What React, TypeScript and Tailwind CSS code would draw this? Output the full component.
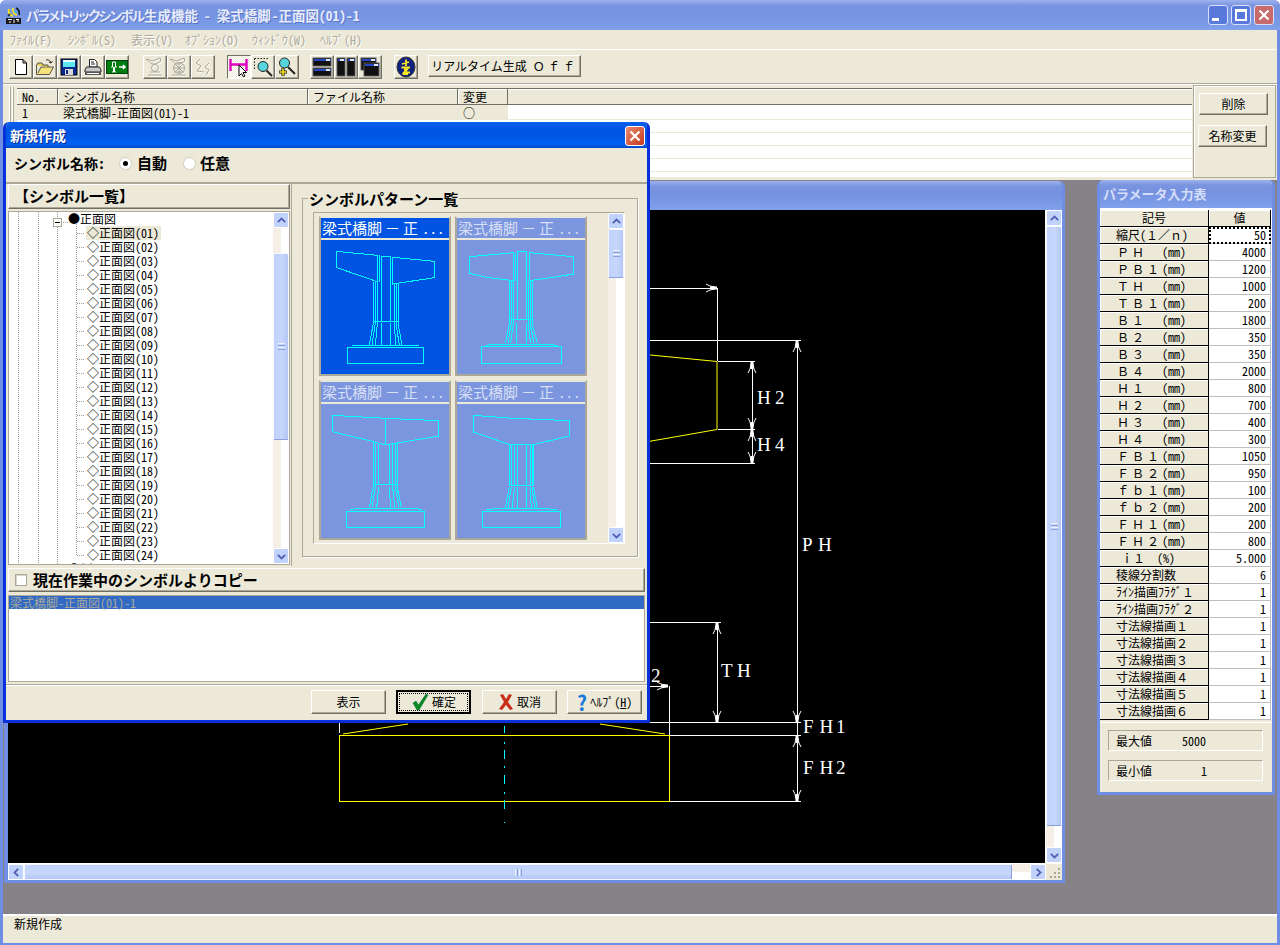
import React from "react";

const raised = "bg-[#ece9d8] border border-t-white border-l-white border-b-[#716f64] border-r-[#716f64] shadow-[inset_-1px_-1px_0_#aca899]";
const titleBg = "bg-[linear-gradient(180deg,#9db2ee_0%,#7a95e0_18%,#7592e0_45%,#7b9ae6_80%,#82a2ee_100%)]";
const fw = "[font-feature-settings:normal]";

function Chevron({ dir }: { dir: "u" | "d" | "l" | "r" }) {
  const a = { u: 0, d: 180, l: 270, r: 90 }[dir];
  return (
    <svg width="9" height="9" viewBox="0 0 9 9" style={{ transform: `rotate(${a}deg)` }}>
      <path d="M0.8 6.2 L4.5 2.5 L8.2 6.2" fill="none" stroke="#4d61b5" strokeWidth="1.8" />
    </svg>
  );
}

function ScrollBtn({ dir }: { dir: "u" | "d" | "l" | "r" }) {
  return (
    <div className="flex h-[16px] w-[16px] shrink-0 items-center justify-center rounded-[2px] border border-white bg-[#c1d3fb]">
      <Chevron dir={dir} />
    </div>
  );
}

function Grip({ vertical }: { vertical?: boolean }) {
  return vertical ? (
    <div className="flex flex-col gap-[1px]">
      <div className="h-[1px] w-[7px] bg-[#eef2fd]" />
      <div className="h-[1px] w-[7px] bg-[#8aa0dc]" />
      <div className="h-[1px] w-[7px] bg-[#eef2fd]" />
      <div className="h-[1px] w-[7px] bg-[#8aa0dc]" />
    </div>
  ) : (
    <div className="flex gap-[1px]">
      <div className="h-[7px] w-[1px] bg-[#eef2fd]" />
      <div className="h-[7px] w-[1px] bg-[#8aa0dc]" />
      <div className="h-[7px] w-[1px] bg-[#eef2fd]" />
      <div className="h-[7px] w-[1px] bg-[#8aa0dc]" />
    </div>
  );
}

function VThumb({ h }: { h: string }) {
  return (
    <div className={`flex w-full items-center justify-center rounded-[2px] border border-[#f4f7ff] border-b-[#8aa0dc] bg-[linear-gradient(90deg,#c1d3fb_0%,#c6d6fc_55%,#b4c7f5_100%)] ${h}`}>
      <Grip vertical />
    </div>
  );
}

/* ---------- toolbar icons ---------- */
const New = () => (
  <svg width="16" height="18" viewBox="0 0 16 18"><path d="M2.5 1.5H10L13.5 5V16.5H2.5Z M10 1.5V5H13.5" fill="#fff" stroke="#000" /></svg>
);
const Open = () => (
  <svg width="20" height="18" viewBox="0 0 20 18">
    <path d="M1.5 7V16.5H14.5L18.5 9H6L3 15" fill="#f6e27a" stroke="#555" />
    <path d="M1.5 7L3 5H7L8 7H13V9" fill="#e8c93f" stroke="#555" />
    <path d="M11 2C13 1.5 15 2 16 5M16 5L14 4M16 5L17.5 3.2" fill="none" stroke="#222" />
  </svg>
);
const Save = () => (
  <svg width="18" height="18" viewBox="0 0 18 18">
    <rect x="1" y="1" width="16" height="16" fill="#0c2a8c" stroke="#000" />
    <rect x="3" y="2" width="12" height="7" fill="#5de7f0" />
    <rect x="3" y="2" width="12" height="2" fill="#eaffff" />
    <rect x="5" y="11" width="8" height="6" fill="#d8d8d8" />
    <rect x="6" y="12" width="2" height="4" fill="#0c2a8c" />
  </svg>
);
const Print = () => (
  <svg width="18" height="18" viewBox="0 0 18 18">
    <path d="M5.5 1.5H10.5L13 4V9H5.5Z" fill="#fff" stroke="#222" />
    <path d="M7 4H10M7 6H11" stroke="#222" />
    <path d="M2.5 9H15.5L17 12V14H1V12Z" fill="#c8c8c8" stroke="#222" />
    <rect x="1" y="14" width="16" height="3" fill="#555" />
    <rect x="3" y="15" width="12" height="1" fill="#fff" />
  </svg>
);
const Exit = () => (
  <svg width="22" height="14" viewBox="0 0 22 14">
    <rect width="22" height="14" fill="#007c10" />
    <rect x="0.5" y="0.5" width="21" height="13" fill="none" stroke="#00400a" />
    <path d="M5 7H6.5V2H9.5V7H11M7.5 7V12M8.5 7V12M6 12H7.5M8.5 12H10" stroke="#fff" fill="none" />
    <path d="M13 7H19M17 5L19 7L17 9" stroke="#fff" fill="none" strokeWidth="1.5" />
  </svg>
);
const Dis1 = ({ wheel }: { wheel?: boolean }) => (
  <svg width="20" height="20" viewBox="0 0 20 20">
    <g fill="none" stroke="#fff" transform="translate(1 1)">
      <path d="M1 2L8 4L15 1L16 4L11 7H7ZM3 18H17M5 15H15" />
      <circle cx="10" cy="11" r="3.5" />
    </g>
    <g fill="none" stroke="#aca899">
      <path d="M1 2L8 4L15 1L16 4L11 7H7ZM3 18H17M5 15H15" />
      <circle cx="10" cy="11" r={wheel ? 5.5 : 3.5} />
      {wheel && <path d="M10 5.5V16.5M4.5 11H15.5M6 7L14 15M14 7L6 15" />}
    </g>
  </svg>
);
const Dis3 = () => (
  <svg width="20" height="20" viewBox="0 0 20 20">
    <path d="M7 2L3 6L8 9L4 14L11 15M16 6L12 10L16 13L13 18" fill="none" stroke="#fff" transform="translate(1 1)" />
    <path d="M7 2L3 6L8 9L4 14L11 15M16 6L12 10L16 13L13 18" fill="none" stroke="#aca899" />
  </svg>
);
const Pick = () => (
  <svg width="20" height="20" viewBox="0 0 20 20">
    <path d="M1.5 2V14M17.5 2V14M2 7.5H17" stroke="#e000c0" strokeWidth="2.4" fill="none" />
    <path d="M10 8L10 19L12.5 16.5L14.5 20L16 19L14 15.5L17.5 15.5Z" fill="#fff" stroke="#000" />
  </svg>
);
const Glass = ({ plus }: { plus?: boolean }) => (
  <svg width="20" height="20" viewBox="0 0 20 20">
    {plus ? (
      <>
        <circle cx="7.5" cy="6" r="5" fill="#56d6dc" stroke="#222" />
        <path d="M11 10L18 17" stroke="#222" strokeWidth="2" />
        <path d="M6 11V19M2 15H10" stroke="#222" strokeWidth="3.2" />
        <path d="M6 11.5V18.5M2.5 15H9.5" stroke="#f8e020" strokeWidth="1.6" />
      </>
    ) : (
      <>
        <path d="M1.5 1.5H16M1.5 1.5V12" stroke="#222" strokeDasharray="1.5 1.5" fill="none" />
        <circle cx="10" cy="9.5" r="5" fill="#56d6dc" stroke="#222" />
        <path d="M13.5 13.5L19 19" stroke="#222" strokeWidth="2" />
      </>
    )}
  </svg>
);
const Win = ({ x, y, w, h }: { x: number; y: number; w: number; h: number }) => (
  <g>
    <rect x={x} y={y} width={w} height={h} fill="#111" stroke="#555" />
    <rect x={x + 1} y={y + 1} width={w - 1} height="2" fill="#2848c8" />
    <rect x={x + w - 5} y={y + 1} width="4" height="2" fill="#dfe6f8" />
  </g>
);
const Stack = () => (
  <svg width="20" height="20" viewBox="0 0 20 20"><Win x={1} y={1} w={18} h={8} /><Win x={1} y={11} w={18} h={8} /></svg>
);
const Side = () => (
  <svg width="20" height="20" viewBox="0 0 20 20"><Win x={1} y={1} w={8} h={18} /><Win x={11} y={1} w={8} h={18} /></svg>
);
const Cascade = () => (
  <svg width="20" height="20" viewBox="0 0 20 20"><Win x={1} y={1} w={15} h={12} /><Win x={4} y={6} w={15} h={13} /></svg>
);
const Globe = () => (
  <svg width="20" height="22" viewBox="0 0 20 22">
    <ellipse cx="10" cy="11" rx="9" ry="10" fill="#10227c" stroke="#333" />
    <path d="M6 8L13 6M10 3.5V10M5.5 11.5H14M9 11V15M12 12.5L8 16.5H14M6.5 18H12" fill="none" stroke="#f8e820" strokeWidth="1.8" />
  </svg>
);

function TBtn({ children, pressed, className = "" }: { children: React.ReactNode; pressed?: boolean; className?: string }) {
  return (
    <div
      className={`flex h-[24px] w-[24px] shrink-0 items-center justify-center ${className} ${
        pressed
          ? "border border-t-[#716f64] border-l-[#716f64] border-b-white border-r-white bg-[repeating-conic-gradient(#ffffff_0%_25%,#ece9d8_0%_50%)] bg-[length:2px_2px]"
          : raised
      }`}
    >
      {children}
    </div>
  );
}

/* ---------- drawing of thumbnails ---------- */
function Pier({ vb, d }: { vb: string; d: string }) {
  return (
    <svg width="128" height="134" viewBox={vb} className="block" shapeRendering="crispEdges">
      <path d={d} fill="none" stroke="#00ffff" strokeWidth="3" />
    </svg>
  );
}

const p1 =
  "M108 214V262L232 305V226Z M278 232L404 244V293L278 312Z M244 228H270 M238 226V305 M244 228V424 M270 228V424 M220 305V430 M226 305V430 M232 305V430 M282 312V430 M288 312V430 M294 312V430 M220 424H294 M220 430L208 495 M226 430L216 495 M232 430L226 495 M244 430V495 M270 430V495 M282 430L288 495 M288 430L298 495 M294 430L306 495 M156 498L184 495H330L356 498 M142 502H371V550H142Z";
const p2 =
  "M508 230L640 218V302L560 292L508 280Z M688 218L821 230V282L760 292L688 302Z M652 214H680 M646 218V302 M652 214V418 M680 214V418 M628 302V430 M634 302V430 M640 302V430 M684 302V430 M690 302V430 M696 302V430 M628 418H700 M628 430L616 490 M634 430L624 490 M640 430L632 490 M650 430V490 M680 430V490 M684 430L692 490 M690 430L702 490 M696 430L712 490 M558 496L585 492H742L770 496 M544 499H785V550H544Z";
const p3 =
  "M97 706V755L225 786L245 792H272L416 768V722L258 715Z M256 716V792 M220 786V920 M226 786V920 M236 790V912 M268 792V912 M276 790V920 M286 790V920 M291 790V920 M220 912H290 M220 920L208 982 M226 920L216 982 M236 920L230 985 M268 920L272 985 M278 920L284 985 M286 920L296 982 M291 920L304 982 M150 990L165 986H355L365 990 M139 994H374V1042H139Z";
const p4 =
  "M520 706V756L630 794H700L808 768V722L640 715Z M628 794V916 M633 794V916 M644 794V916 M652 794V916 M680 794V916 M690 794V916 M696 794V916 M700 794V916 M628 916H700 M628 920L616 985 M634 920L624 985 M644 920L636 985 M652 920V985 M680 920V985 M690 920L694 985 M696 920L704 985 M700 920L712 985 M558 990L585 986H742L770 990 M548 994H782V1042H548Z";

function Thumb({ sel, vb, d }: { sel?: boolean; vb: string; d: string }) {
  const c = sel ? "bg-[#0054e3] text-white" : "bg-[#7b96df] text-[#d8dff5]";
  return (
    <div className="h-[160px] w-[132px] border-2 border-[#aca899] border-t-[#e8e6da] bg-[#ece9d8]">
      <div className={`h-[20px] overflow-hidden whitespace-nowrap pl-[1px] text-[15px] leading-[20px] ${c}`}>
        梁式橋脚<span className={`mx-[3px] ${fw}`}>－</span>正<span className="ml-[4px]">...</span>
      </div>
      <div className="h-[2px]" />
      <div className={c}>
        <Pier vb={vb} d={d} />
      </div>
    </div>
  );
}

/* ---------- CAD canvas ---------- */
function Arr({ x, y, a }: { x: number; y: number; a: number }) {
  return (
    <g transform={`translate(${x} ${y}) rotate(${a})`} stroke="#fff" fill="none">
      <path d="M0 0V7" strokeWidth="3" />
      <path d="M-1 2L-2 7L-4 11M1 2L2 7L4 11" strokeWidth="1" />
    </g>
  );
}

function Dim({ x, y, t, gap = 18 }: { x: number; y: number; t: string; gap?: number }) {
  const xs = t.split("").map((_, i) => x + i * gap).join(" ");
  return (
    <text x={xs} y={y} fill="#fff" fontSize="19" className="font-['Liberation_Serif',serif]">
      {t}
    </text>
  );
}

function Canvas() {
  return (
    <svg viewBox="8 210 1037 653" width="1037" height="653" className="block bg-black">
      <g fill="none" stroke="#fff" strokeWidth="1" shapeRendering="crispEdges">
        <path d="M640 288.5H717.5V361 M640 340.5H801 M797.5 340V802 M718 361.5H755 M752.5 361V463 M718 429.5H755 M640 463.5H755 M640 622.5H721 M717.5 622V722 M640 722.5H801 M669.5 686V735 M640 686.5H668 M670 735.5H801 M670 801.5H801 M339.5 723V733" />
      </g>
      <g fill="none" stroke="#ffff00" strokeWidth="1">
        <path d="M640 354L717 361.5V429.5L640 443" />
        <path d="M343 734L408 724M600 724L665 734" />
        <path d="M339.5 735.5H669.5V801.5H339.5Z" shapeRendering="crispEdges" />
      </g>
      <path d="M504.5 726V733M504.5 742V744M504.5 750V759M504.5 766V768M504.5 775V784M504.5 792V794M504.5 800V809M504.5 822V823" stroke="#00ffff" strokeWidth="1" fill="none" shapeRendering="crispEdges" />
      <Arr x={717} y={288} a={90} />
      <Arr x={797} y={341} a={0} />
      <Arr x={752} y={362} a={0} />
      <Arr x={752} y={429} a={180} />
      <Arr x={752} y={430} a={0} />
      <Arr x={752} y={463} a={180} />
      <Arr x={717} y={623} a={0} />
      <Arr x={717} y={722} a={180} />
      <Arr x={797} y={722} a={180} />
      <Arr x={797} y={736} a={0} />
      <Arr x={797} y={801} a={180} />
      <Arr x={668} y={686} a={90} />
      <Dim x={757} y={404} t="H2" />
      <Dim x={757} y={451} t="H4" />
      <Dim x={802} y={551} t="PH" gap={16} />
      <Dim x={721} y={677} t="TH" gap={16} />
      <Dim x={803} y={733} t="FH1" gap={16.5} />
      <Dim x={803} y={774} t="FH2" gap={16.5} />
      <Dim x={651} y={682} t="2" />
    </svg>
  );
}

/* ---------- parameter panel ---------- */
const mm = (a: string) => (
  <span className="pl-[17px]">
    <span className={`tracking-[3px] ${fw}`}>{a}</span>(mm)
  </span>
);
const line = (a: string, n: string) => (
  <span className="pl-[16px]">
    {a}
    <span className={fw}>{n}</span>
  </span>
);
const rows: [React.ReactNode, string][] = [
  [<span className="pl-[16px]">縮尺(<span className={fw}>１／ｎ</span>)</span>, "50"],
  [mm("ＰＨ　"), "4000"],
  [mm("ＰＢ１"), "1200"],
  [mm("ＴＨ　"), "1000"],
  [mm("ＴＢ１"), "200"],
  [mm("Ｂ１　"), "1800"],
  [mm("Ｂ２　"), "350"],
  [mm("Ｂ３　"), "350"],
  [mm("Ｂ４　"), "2000"],
  [mm("Ｈ１　"), "800"],
  [mm("Ｈ２　"), "700"],
  [mm("Ｈ３　"), "400"],
  [mm("Ｈ４　"), "300"],
  [mm("ＦＢ１"), "1050"],
  [mm("ＦＢ２"), "950"],
  [mm("ｆｂ１"), "100"],
  [mm("ｆｂ２"), "200"],
  [mm("ＦＨ１"), "200"],
  [mm("ＦＨ２"), "800"],
  [<span className="pl-[21px]"><span className={fw}>ｉ１　</span>(%)</span>, "5.000"],
  [<span className="pl-[16px]">稜線分割数</span>, "6"],
  [line("ﾗｲﾝ描画ﾌﾗｸﾞ", "１"), "1"],
  [line("ﾗｲﾝ描画ﾌﾗｸﾞ", "２"), "1"],
  [line("寸法線描画", "１"), "1"],
  [line("寸法線描画", "２"), "1"],
  [line("寸法線描画", "３"), "1"],
  [line("寸法線描画", "４"), "1"],
  [line("寸法線描画", "５"), "1"],
  [line("寸法線描画", "６"), "1"],
];

function ParamPanel() {
  const headCell = "h-[17px] border-r border-b border-black bg-[#ece9d8] shadow-[inset_1px_1px_0_#fff] text-center leading-[16px]";
  return (
    <div className="absolute left-[1094px] top-0 flex h-[615px] w-[178px] flex-col overflow-hidden rounded-t-[6px] border-x-[3px] border-b-[3px] border-[#6f8de3] bg-[#ece9d8] text-[12px] text-black">
      <div className={`-mx-[3px] flex h-[28px] shrink-0 items-center pl-[6px] text-[13px] font-bold text-[#d5def8] ${titleBg}`}>パラメータ入力表</div>
      <div className="bg-white pt-[2px]">
        <div className="flex w-[171px]">
          <div className={`${headCell} w-[109px]`}>記号</div>
          <div className={`${headCell} w-[62px]`}>値</div>
        </div>
        {rows.map(([label, val], i) => (
          <div key={i} className="flex h-[17px] w-[171px]">
            <div className="h-[17px] w-[109px] border-r border-b border-black bg-[#ece9d8] leading-[16px] shadow-[inset_1px_1px_0_#fff] whitespace-nowrap">{label}</div>
            <div className={`h-[17px] w-[62px] border-r border-b border-[#c0c0c0] bg-white pr-[4px] text-right leading-[16px] ${i === 0 ? "outline-2 outline-dotted -outline-offset-2 outline-black" : ""}`}>{val}</div>
          </div>
        ))}
      </div>
      <div className="mt-[2px] flex flex-1 flex-col gap-[9px] border-t border-white px-[8px] pt-[7px]">
        <div className="flex h-[21px] w-[155px] items-center border border-t-[#aca899] border-l-[#aca899] border-b-white border-r-white">
          <span className="w-[73px] pl-[7px]">最大値</span>
          <span>5000</span>
        </div>
        <div className="flex h-[21px] w-[155px] items-center border border-t-[#aca899] border-l-[#aca899] border-b-white border-r-white">
          <span className="w-[92px] pl-[7px]">最小値</span>
          <span>1</span>
        </div>
      </div>
    </div>
  );
}

/* ---------- dialog ---------- */
const treeNums = Array.from({ length: 24 }, (_, i) => String(i + 1).padStart(2, "0"));

function Tree() {
  return (
    <div className="relative mt-[2px] flex h-[354px] overflow-hidden border border-[#aca899] bg-white">
      <svg width="80" height="354" className="absolute left-0 top-0" stroke="#999" strokeDasharray="1 1" fill="none" shapeRendering="crispEdges">
        <path d="M9.5 0V354M29.5 0V354M48.5 0V6M48.5 15V354M54 10.5H60M67.5 10V343M67.5 21.5H76" />
        {treeNums.map((n, i) => (
          <path key={n} d={`M68 ${21.5 + i * 14}H76`} />
        ))}
      </svg>
      <div className="absolute left-[44px] top-[6px] flex h-[9px] w-[9px] items-center justify-center border border-[#aca899] bg-white">
        <div className="h-[1px] w-[5px] bg-black" />
      </div>
      <div className="relative flex-1 overflow-hidden text-[12px] leading-[14px] text-black">
        <div className="h-[14px] pl-[59px]">●正面図</div>
        {treeNums.map((n, i) => (
          <div key={n} className="h-[14px] pl-[77px]">
            <span className={`inline-block pl-[1px] pr-[2px] ${i === 0 ? "bg-[#ece9d8]" : ""}`}>◇正面図({n})</span>
          </div>
        ))}
        <div className="h-[14px] pl-[59px]">●側面図</div>
      </div>
      <div className="flex w-[16px] shrink-0 flex-col">
        <ScrollBtn dir="u" />
        <div className="h-[25px] bg-[linear-gradient(90deg,#f5efe8_50%,#fff_50%)]" />
        <VThumb h="h-[187px]" />
        <div className="flex-1 bg-[linear-gradient(90deg,#f5efe8_50%,#fff_50%)]" />
        <ScrollBtn dir="d" />
      </div>
    </div>
  );
}

function DlgBtn({ children, def }: { children: React.ReactNode; def?: boolean }) {
  return (
    <div
      className={`flex h-[24px] w-[75px] items-center justify-center gap-[3px] text-[12px] text-black ${
        def ? "border-2 border-black bg-[#ece9d8] outline-1 outline-dotted -outline-offset-4 outline-black" : raised
      }`}
    >
      {children}
    </div>
  );
}

function Radio({ on }: { on?: boolean }) {
  return (
    <div className="flex h-[13px] w-[13px] items-center justify-center rounded-full border border-[#cfcdc0] bg-white">
      {on && <div className="h-[5px] w-[5px] rounded-full bg-black" />}
    </div>
  );
}

function Dialog() {
  return (
    <div className="absolute left-[3px] top-[122px] flex h-[601px] w-[647px] flex-col overflow-hidden rounded-t-[6px] border-x-[3px] border-b-[3px] border-[#0831d9] bg-[#ece9d8] text-black">
      <div className="-mx-[3px] flex h-[26px] shrink-0 items-center justify-between bg-[linear-gradient(180deg,#0a60f0_0%,#0058e6_15%,#0054e3_50%,#0062f4_85%,#0048c8_100%)] pl-[7px] pr-[5px] text-[14px] font-bold text-white [text-shadow:1px_1px_0_#0a2a90]">
        <span>新規作成</span>
        <div className="mt-[1px] flex h-[20px] w-[20px] items-center justify-center rounded-[3px] border border-white bg-[linear-gradient(135deg,#e88a70,#c83a1e)]">
          <svg width="12" height="12" viewBox="0 0 12 12"><path d="M1.5 1.5L10.5 10.5M10.5 1.5L1.5 10.5" stroke="#fff" strokeWidth="2.2" /></svg>
        </div>
      </div>

      <div className="flex h-[34px] shrink-0 items-center pb-[4px] pl-[8px] text-[14px] font-bold">
        <span className="w-[105px]">シンボル名称：</span>
        <Radio on />
        <span className="ml-[5px] w-[46px] text-[15px]">自動</span>
        <Radio />
        <span className="ml-[4px] text-[15px]">任意</span>
      </div>

      <div className="flex h-[384px] shrink-0 border-t-2 border-t-[#aca899] px-[2px]">
        <div className="w-[282px] shrink-0">
          <div className={`${raised} flex h-[25px] items-center pl-[5px] text-[15px] font-bold`}>【シンボル一覧】</div>
          <Tree />
        </div>
        <div className="ml-[1px] flex-1 border-l border-l-[#aca899] pl-[10px] pt-[14px]">
          <div className="relative h-[359px] w-[336px] border border-[#aca899] pl-[10px] pt-[13px] shadow-[1px_1px_0_#fff]">
            <span className="absolute -top-[9px] left-[5px] bg-[#ece9d8] px-[1px] text-[15px] font-bold leading-[17px]">シンボルパターン一覧</span>
            <div className="flex h-[332px] w-[312px] border border-[#aca899] border-b-white border-r-white pl-[5px] pt-[3px]">
              <div className="grid w-[268px] shrink-0 grid-cols-[132px_132px] content-start gap-x-[4px] gap-y-[4px]">
                <Thumb sel vb="63 180 384 402" d={p1} />
                <Thumb vb="471 180 384 402" d={p2} />
                <Thumb vb="63 672 384 402" d={p3} />
                <Thumb vb="471 672 384 402" d={p4} />
              </div>
              <div className="-mt-[3px] ml-[21px] flex w-[16px] shrink-0 flex-col">
                <ScrollBtn dir="u" />
                <VThumb h="h-[49px]" />
                <div className="flex-1 bg-[linear-gradient(90deg,#f5efe8_50%,#fff_50%)]" />
                <ScrollBtn dir="d" />
              </div>
            </div>
          </div>
        </div>
      </div>

      <div className={`${raised} mx-[2px] mt-[2px] flex h-[24px] shrink-0 items-center pl-[6px] text-[15px] font-bold`}>
        <div className="mr-[6px] h-[12px] w-[12px] border border-[#aca899] bg-white shadow-[inset_1px_1px_0_#d8d6c8]" />
        現在作業中のシンボルよりコピー
      </div>

      <div className="mx-[2px] mt-[3px] h-[87px] shrink-0 border border-[#aca899] bg-white">
        <div className="h-[13px] bg-[#316ac5] pl-[1px] text-[12px] leading-[13px] text-[#aca899]">梁式橋脚-正面図(01)-1</div>
      </div>

      <div className="mt-[2px] flex flex-1 items-start justify-end gap-[10px] border-t border-t-[#aca899] pr-[5px] pt-[5px] shadow-[inset_0_1px_0_#fff]">
        <DlgBtn>表示</DlgBtn>
        <DlgBtn def>
          <svg width="18" height="18" viewBox="0 0 18 18"><path d="M2 10L5 8L7.5 12L15 1L17 2L8 17H6Z" fill="#0a8a1e" stroke="#064" strokeWidth="0.5" /></svg>
          確定
        </DlgBtn>
        <div className="ml-[1px]">
          <DlgBtn>
            <svg width="16" height="18" viewBox="0 0 16 18"><path d="M2 2L5 1L8 6L11 1L14 2L10 9L15 16L12 17L8 12L4 17L1 16L6 9Z" fill="#c8301a" /></svg>
            取消
          </DlgBtn>
        </div>
        <DlgBtn>
          <span className="text-[21px] font-bold leading-[20px] text-[#1a78d8]">?</span>
          <span>ﾍﾙﾌﾟ(<span className="underline">H</span>)</span>
        </DlgBtn>
      </div>
    </div>
  );
}

/* ---------- main ---------- */
const cols = ["w-[41px]", "w-[250px]", "w-[150px]", "w-[50px]"];

function WinBtn({ close, children }: { close?: boolean; children: React.ReactNode }) {
  return (
    <div className={`flex h-[20px] w-[20px] items-center justify-center rounded-[3px] border border-[#d8e0f8] ${close ? "bg-[#c8696b]" : "bg-[#5878dc]"}`}>
      {children}
    </div>
  );
}

export default function App() {
  return (
    <div className="relative flex h-[945px] w-[1280px] flex-col overflow-hidden rounded-t-[6px] bg-[#6f8de3] font-['Noto_Sans_CJK_JP','Noto_Sans',sans-serif] [font-feature-settings:'hwid']">
      {/* title */}
      <div className={`flex h-[30px] shrink-0 items-center pl-[6px] pr-[6px] ${titleBg}`}>
        <svg width="15" height="17" viewBox="0 0 15 17" className="shrink-0">
          <rect x="0" y="11" width="15" height="6" fill="#1a1a1a" />
          <path d="M2 12.5H6M3 15H5M8 12.5V16M10 12.5H13M11 14H13" stroke="#fff" />
          <path d="M3 2C2 5 3 8 7 9M7 1C6 4 8 7 11 8" stroke="#f8e020" strokeWidth="2" fill="none" />
          <path d="M10 1C12 2 14 4 13 8M2 9L4 7" stroke="#102030" strokeWidth="1.6" fill="none" />
          <path d="M8 4L10 6" stroke="#30c8e0" strokeWidth="1.6" />
        </svg>
        <div className="ml-[5px] flex items-center whitespace-nowrap text-[13.5px] font-bold text-[#e6ebfa] [text-shadow:1px_1px_0_#5a74c8]">
          <span className="w-[118px] tracking-[-1.6px] [font-feature-settings:'palt']">パラメトリックシンボル</span>
          <span>生成機能</span>
          <span className="mx-[6px]">-</span>
          <span>梁式橋脚</span>
          <span className="ml-[1px]">-正面図(01)-1</span>
        </div>
        <div className="ml-auto flex gap-[3px]">
          <WinBtn><div className="mt-[9px] -ml-[5px] h-[3px] w-[7px] bg-white" /></WinBtn>
          <WinBtn><div className="h-[12px] w-[12px] border-2 border-t-[3px] border-white" /></WinBtn>
          <WinBtn close><svg width="12" height="12" viewBox="0 0 12 12"><path d="M1.5 1.5L10.5 10.5M10.5 1.5L1.5 10.5" stroke="#fff" strokeWidth="2.2" /></svg></WinBtn>
        </div>
      </div>

      <div className="mx-[3px] flex shrink-0 flex-col bg-[#ece9d8]">
        {/* menu */}
        <div className="flex h-[19px] items-center pl-[7px] text-[12px] text-[#aca899] [text-shadow:1px_1px_0_#fff]">
          <span>ﾌｧｲﾙ(F)</span>
          <span className="ml-[16px]">ｼﾝﾎﾞﾙ(S)</span>
          <span className="ml-[15px]">表示(V)</span>
          <span className="ml-[12px]">ｵﾌﾟｼｮﾝ(O)</span>
          <span className="ml-[13px]">ｳｨﾝﾄﾞｳ(W)</span>
          <span className="ml-[14px]">ﾍﾙﾌﾟ(H)</span>
        </div>
        <div className="h-[1px] bg-white" />
        {/* toolbar */}
        <div className="flex h-[34px] items-start border-b border-b-[#aca899] pl-[6px] pt-[5px]">
          <TBtn><New /></TBtn>
          <TBtn><Open /></TBtn>
          <TBtn><Save /></TBtn>
          <TBtn><Print /></TBtn>
          <TBtn><Exit /></TBtn>
          <TBtn className="ml-[14px]"><Dis1 /></TBtn>
          <TBtn><Dis1 wheel /></TBtn>
          <TBtn><Dis3 /></TBtn>
          <TBtn pressed className="ml-[12px]"><Pick /></TBtn>
          <TBtn><Glass /></TBtn>
          <TBtn><Glass plus /></TBtn>
          <TBtn className="ml-[11px]"><Stack /></TBtn>
          <TBtn><Side /></TBtn>
          <TBtn><Cascade /></TBtn>
          <TBtn className="ml-[12px]"><Globe /></TBtn>
          <div className={`${raised} ml-[10px] flex h-[22px] w-[153px] items-center justify-center text-[12px] text-black`}>
            リアルタイム生成<span className={`ml-[6px] tracking-[3px] ${fw}`}>Ｏｆｆ</span>
          </div>
        </div>
        {/* band */}
        <div className="flex h-[96px] border-t border-t-white">
          <div className="ml-[6px] mt-[2px] flex h-[90px] w-[6px] shrink-0 gap-[1px]">
            <div className="w-[2px] border-l border-l-white border-r border-r-[#aca899]" />
            <div className="w-[2px] border-l border-l-white border-r border-r-[#aca899]" />
          </div>
          <div className="ml-[2px] mt-[3px] h-[89px] w-[1175px] shrink-0 overflow-hidden bg-white text-[12px] text-black">
            <div className="flex h-[17px]">
              {["No.", "シンボル名称", "ファイル名称", "変更"].map((t, i) => (
                <div key={t} className={`${cols[i]} shrink-0 border-y border-r border-[#716f64] bg-[#ece9d8] pl-[5px] leading-[15px] shadow-[inset_1px_1px_0_#fff]`}>{t}</div>
              ))}
              <div className="flex-1 border-y border-[#716f64] bg-[#ece9d8] shadow-[inset_0_1px_0_#fff]" />
            </div>
            <div className="flex h-[15px] border-b border-b-[#ece9d8] leading-[15px]">
              <div className={`${cols[0]} shrink-0 bg-[#ece9d8] pl-[5px]`}>1</div>
              <div className={`${cols[1]} shrink-0 bg-[#ece9d8] pl-[5px]`}>梁式橋脚-正面図(01)-1</div>
              <div className={`${cols[2]} shrink-0 bg-[#ece9d8]`} />
              <div className={`${cols[3]} shrink-0 bg-[#ece9d8] pl-[5px]`}>○</div>
            </div>
            <div className="h-[13px] border-b border-b-[#ece9d8]" />
            <div className="h-[13px] border-b border-b-[#ece9d8]" />
            <div className="h-[13px] border-b border-b-[#ece9d8]" />
            <div className="h-[13px] border-b border-b-[#ece9d8]" />
          </div>
          <div className="ml-[1px] flex h-[93px] w-[83px] flex-col gap-[10px] border border-[#aca899] pl-[5px] pt-[7px] shadow-[inset_1px_1px_0_#fff]">
            <div className={`${raised} flex h-[22px] w-[69px] items-center justify-center text-[12px] text-black`}>削除</div>
            <div className={`${raised} -ml-[1px] flex h-[22px] w-[69px] items-center justify-center text-[12px] text-black`}>名称変更</div>
          </div>
        </div>
      </div>

      {/* MDI area */}
      <div className="relative mx-[3px] flex-1 bg-[#858387]">
        <div className="absolute left-[1px] top-[1px] flex h-[702px] w-[1061px] flex-col overflow-hidden rounded-t-[6px] border-x-[4px] border-b-[3px] border-[#6f8de3] border-r-[3px]">
          <div className={`-mx-[4px] h-[29px] shrink-0 ${titleBg}`} />
          <div className="flex">
            <Canvas />
            <div className="flex h-[653px] w-[17px] shrink-0 flex-col bg-white pl-[1px]">
              <ScrollBtn dir="u" />
              <div className="flex h-[600px] items-center justify-center rounded-[2px] border border-[#f4f7ff] border-b-[#8aa0dc] bg-[linear-gradient(90deg,#c1d3fb_0%,#c6d6fc_60%,#b4c7f5_100%)]">
                <Grip vertical />
              </div>
              <div className="flex-1 bg-[linear-gradient(90deg,#f5efe8_50%,#fff_50%)]" />
              <ScrollBtn dir="d" />
            </div>
          </div>
          <div className="flex h-[17px] shrink-0 bg-white pt-[1px]">
            <ScrollBtn dir="l" />
            <div className="flex w-[988px] items-center justify-center rounded-[2px] border border-[#f4f7ff] border-r-[#8aa0dc] bg-[linear-gradient(180deg,#c1d3fb_0%,#c6d6fc_60%,#b4c7f5_100%)]">
              <Grip />
            </div>
            <div className="w-[18px] bg-[linear-gradient(180deg,#f5efe8_50%,#fff_50%)]" />
            <ScrollBtn dir="r" />
            <div className="flex flex-1 items-end justify-end bg-[#ece9d8] pb-[1px] pr-[1px]">
              <svg width="12" height="12" viewBox="0 0 12 12" fill="#aca899"><rect x="9" y="1" width="2" height="2" /><rect x="5" y="5" width="2" height="2" /><rect x="9" y="5" width="2" height="2" /><rect x="1" y="9" width="2" height="2" /><rect x="5" y="9" width="2" height="2" /><rect x="9" y="9" width="2" height="2" /></svg>
            </div>
          </div>
        </div>
        <ParamPanel />
      </div>

      {/* status */}
      <div className="mx-[3px] mb-[2px] h-[29px] shrink-0 border-t-2 border-t-white bg-[#ece9d8] pl-[11px] text-[12px] leading-[16px] text-black">
        新規作成
      </div>

      <Dialog />
    </div>
  );
}
